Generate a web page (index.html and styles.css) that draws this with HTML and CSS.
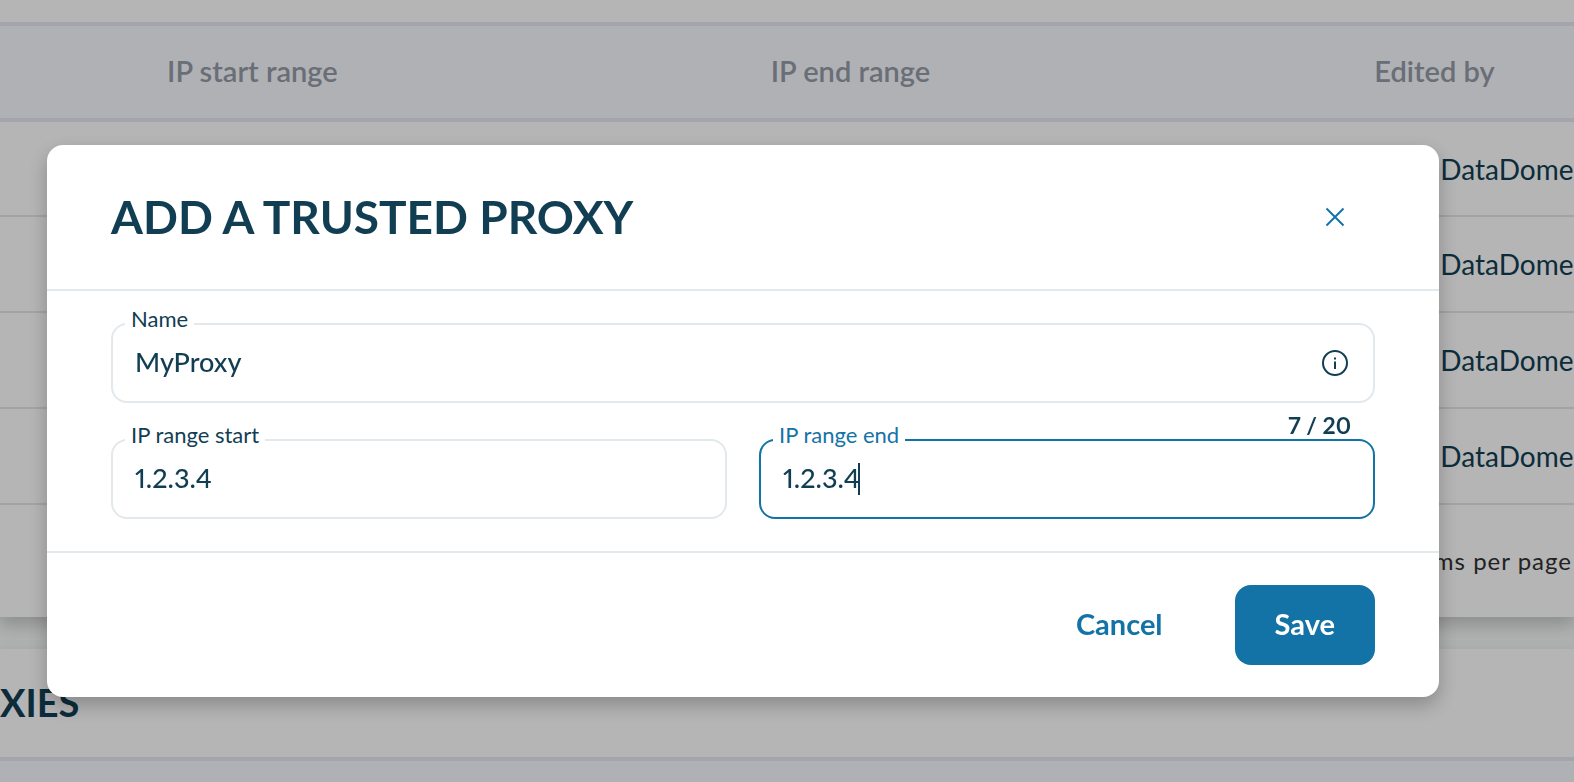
FILE: index.html
```html
<!DOCTYPE html>
<html lang="en">
<head>
	<meta charset="UTF-8">
	<meta name="viewport" content="width=device-width, initial-scale=1.0">
	<title>Trusted proxies</title>
	<link rel="stylesheet" href="styles.css">
</head>
<body>
<main class="page">
	<!-- Current list -->
	<section class="card">
		<table class="table">
			<colgroup>
				<col class="col-first">
				<col class="col-range">
				<col class="col-range">
				<col>
			</colgroup>
			<thead>
				<tr><th></th><th>IP start range</th><th>IP end range</th><th>Edited by</th></tr>
			</thead>
			<tbody>
				<tr><td></td><td></td><td></td><td class="editor">DataDome</td></tr>
				<tr><td></td><td></td><td></td><td class="editor">DataDome</td></tr>
				<tr><td></td><td></td><td></td><td class="editor">DataDome</td></tr>
				<tr><td></td><td></td><td></td><td class="editor">DataDome</td></tr>
			</tbody>
		</table>
		<div class="paginator">Items per page</div>
	</section>

	<!-- Next list -->
	<section class="card">
		<h2 class="card-title">XIES</h2>
		<div class="card-head"></div>
	</section>
</main>

<div class="overlay">
	<form class="modal" role="dialog" aria-labelledby="modal-title">
		<header class="modal-header">
			<h1 class="modal-title" id="modal-title">ADD A TRUSTED PROXY</h1>
			<button type="button" class="btn-close" aria-label="Close">
				<svg width="20" height="20" viewBox="0 0 20 20" fill="none" stroke="currentColor" stroke-width="2">
					<path d="M1.5 1.5l17 17M18.5 1.5l-17 17"/>
				</svg>
			</button>
		</header>

		<div class="modal-body">
			<div class="field">
				<label for="name">Name</label>
				<input type="text" id="name" value="MyProxy" maxlength="20">
				<svg class="info" width="28" height="28" viewBox="0 0 28 28" fill="none" stroke="currentColor" stroke-width="2">
					<circle cx="14" cy="14" r="12"/>
					<path d="M14 12.5v7.5M14 8.5v2"/>
				</svg>
			</div>
			<div class="counter">7 / 20</div>
			<div class="row">
				<div class="field">
					<label for="ip-start">IP range start</label>
					<input type="text" id="ip-start" value="1.2.3.4">
				</div>
				<div class="field focused">
					<label for="ip-end">IP range end</label>
					<input type="text" id="ip-end" value="1.2.3.4">
					<span class="caret"></span>
				</div>
			</div>
		</div>

		<footer class="modal-footer">
			<button type="button" class="btn btn-text">Cancel</button>
			<button type="submit" class="btn btn-primary">Save</button>
		</footer>
	</form>
</div>
</body>
</html>
```

FILE: styles.css
```css
:root {
	--text: #113e53;
	--primary: #1473a6;
	--line: #e3e8ec;
	--head-bg: #f8f9ff;
	--head-line: #e6e8f4;
}

* {
	margin: 0;
	padding: 0;
	box-sizing: border-box;
}

body {
	background: #f7faf9;
	color: var(--text);
	font-family: Lato, "Liberation Sans", sans-serif;
	font-size: 28px;
	font-variant-numeric: proportional-nums;
	line-height: 36px;
	height: 100vh;
	overflow: hidden;
}

button,
input {
	font: inherit;
	font-variant-numeric: inherit;
	color: inherit;
	border: none;
	background: none;
}

/* page behind the dialog */
.page {
	display: flex;
	flex-direction: column;
	gap: 32px;
	height: 100vh;
	overflow: hidden;
}

.card {
	flex-shrink: 0;
	background: #fff;
	padding-top: 22px;
	box-shadow: 0 8px 16px rgba(0, 0, 0, 0.2);
}

.table {
	width: 100%;
	table-layout: fixed;
	border-collapse: collapse;
}

.col-first {
	width: 9.6%;
}

.col-range {
	width: 38.35%;
}

.table th,
.table td {
	height: 96px;
	padding: 0 16px;
	text-align: left;
	white-space: nowrap;
	border-bottom: 2px solid var(--line);
}

.table th {
	padding-bottom: 2px;
	background: var(--head-bg);
	border-top: 4px solid var(--head-line);
	border-bottom: 4px solid var(--head-line);
	color: #949ca8;
	font-size: 29px;
	font-weight: 600;
}

.table .editor {
	padding-left: 82px;
	padding-right: 0;
}

.paginator {
	display: flex;
	align-items: center;
	justify-content: flex-end;
	height: 112px;
	padding-right: 2px;
	color: #303030;
	font-size: 24px;
	letter-spacing: 1px;
}

.card-title {
	height: 86px;
	line-height: 62px;
	font-size: 38px;
	font-weight: 700;
}

.card-head {
	height: 96px;
	background: var(--head-bg);
	border-top: 4px solid var(--head-line);
}

/* dialog */
.overlay {
	position: fixed;
	inset: 0;
	background: rgba(0, 0, 0, 0.29);
	padding: 145px 135px 0 47px;
}

.modal {
	background: #fff;
	border-radius: 16px;
	box-shadow: 0 8px 20px rgba(0, 0, 0, 0.25);
}

.modal-header {
	display: flex;
	align-items: center;
	justify-content: space-between;
	height: 146px;
	padding: 0 64px;
	border-bottom: 2px solid var(--line);
}

.modal-title {
	font-size: 46px;
	line-height: 56px;
	font-weight: 700;
}

.btn-close {
	display: flex;
	align-items: center;
	justify-content: center;
	width: 80px;
	height: 80px;
	color: var(--primary);
}

.modal-body {
	padding: 32px 64px;
}

.field {
	position: relative;
	flex: 1;
	display: flex;
	align-items: center;
	height: 80px;
	padding: 0 24px 0 22px;
	border: 2px solid var(--line);
	border-radius: 16px;
}

.field label {
	position: absolute;
	top: -20px;
	left: 12px;
	padding: 0 6px;
	background: #fff;
	font-size: 22px;
	line-height: 28px;
}

.field input {
	flex: 1;
	min-width: 0;
	height: 36px;
	padding-bottom: 2px;
	outline: none;
	font-size: 27px;
	font-weight: 500;
}

.field.focused {
	border-color: var(--primary);
}

.field.focused label {
	color: var(--primary);
}

.field.focused input {
	caret-color: transparent;
}

.caret {
	position: absolute;
	left: 97px;
	width: 2px;
	height: 32px;
	background: var(--text);
}

.counter {
	height: 36px;
	padding-right: 24px;
	line-height: 44px;
	font-size: 23px;
	font-weight: 700;
	text-align: right;
}

.row {
	display: flex;
	gap: 32px;
}

.modal-footer {
	display: flex;
	justify-content: flex-end;
	gap: 32px;
	padding: 32px 64px;
	border-top: 2px solid var(--line);
}

.btn {
	height: 80px;
	padding: 0 40px 2px;
	border-radius: 16px;
	font-size: 29px;
	font-weight: 700;
}

.btn-text {
	color: var(--primary);
}

.btn-primary {
	background: var(--primary);
	color: #fff;
}
```
